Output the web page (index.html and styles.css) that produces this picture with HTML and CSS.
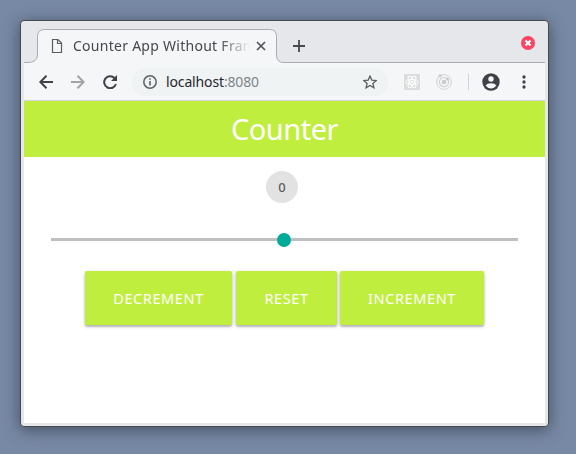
FILE: index.html
```html
<!DOCTYPE html>
<html lang="en">
<head>
<meta charset="utf-8">
<title>Counter App Without Frameworks</title>
<link rel="stylesheet" href="styles.css">
</head>
<body>
<div class="window">
  <div class="tabstrip">
    <svg class="tab-shape" width="521" height="42" viewBox="0 0 521 42"><path d="M0 42V38.500H3Q13.500 38.500 13.500 31V12.500Q13.500 5.500 20.500 5.500H245.500Q252.500 5.500 252.500 12.500V31Q252.500 38.500 260 38.500H521V42Z" fill="#f5f6f8"/><path d="M0 38.500H3Q13.500 38.500 13.500 31V12.500Q13.500 5.500 20.500 5.500H245.500Q252.500 5.500 252.500 12.500V31Q252.500 38.500 260 38.500H521" fill="none" stroke="#a9abae"/></svg>
    <div class="tab">
      <svg class="file" width="12" height="16" viewBox="0 0 12 16" fill="none" stroke="#5a5c60" stroke-width="1.200"><path d="M1.500 1.500H7L10.500 5V14.500H1.500ZM6.500 1.500V5.500H10.500"/></svg>
      <span class="tab-title">Counter App Without Frameworks</span>
      <svg class="tab-x" width="10" height="10" viewBox="0 0 10 10" stroke="#505257" stroke-width="1.700"><path d="M1 1L9 9M9 1L1 9"/></svg>
    </div>
    <svg class="plus" width="12" height="12" viewBox="0 0 12 12" stroke="#47494f" stroke-width="1.800"><path d="M6 0V12M0 6H12"/></svg>
    <svg class="close" width="14" height="14" viewBox="0 0 14 14"><circle cx="7" cy="7" r="7" fill="#fc4364"/><path d="M4.500 4.500L9.500 9.500M9.500 4.500L4.500 9.500" stroke="#fff" stroke-width="2.200"/></svg>
  </div>
  <div class="toolbar">
    <svg class="back" width="14" height="14" viewBox="0 0 14 14" fill="none" stroke="#404148" stroke-width="2"><path d="M14 7H1.500M7.500 .700L1.300 7L7.500 13.300"/></svg>
    <svg class="forward" width="14" height="14" viewBox="0 0 14 14" fill="none" stroke="#a3a4a7" stroke-width="2"><path d="M0 7H12.500M6.500 .700L12.700 7L6.500 13.300"/></svg>
    <svg class="reload" width="14" height="14" viewBox="0 0 14 14"><path d="M12.900 9A6 6 0 1 1 11.500 3" fill="none" stroke="#404148" stroke-width="2"/><path d="M14 0V6H8Z" fill="#404148"/></svg>
    <div class="address">
      <svg class="info" width="14" height="14" viewBox="0 0 14 14"><circle cx="7" cy="7" r="6.200" fill="none" stroke="#5e6166" stroke-width="1.500"/><path d="M7 3.200V4.800M7 6V10.600" stroke="#5e6166" stroke-width="1.600"/></svg>
      <span class="url">localhost<span class="port">:8080</span></span>
      <svg class="star" width="14" height="14" viewBox="0 0 14 14"><path d="M7 1L8.800 5.100L13.300 5.500L9.900 8.400L10.900 12.800L7 10.500L3.100 12.800L4.100 8.400L.700 5.500L5.200 5.100Z" fill="none" stroke="#5b5e62" stroke-width="1.300"/></svg>
    </div>
    <svg class="react" width="16" height="16" viewBox="0 0 16 16"><path fill="#dbdcdc" d="M0 0H16V16H0Z"/><g fill="none" stroke="#fff" stroke-width="1"><ellipse cx="8" cy="8" rx="6.300" ry="2.500"/><ellipse cx="8" cy="8" rx="6.300" ry="2.500" transform="rotate(60 8 8)"/><ellipse cx="8" cy="8" rx="6.300" ry="2.500" transform="rotate(120 8 8)"/></g><circle cx="8" cy="8" r="1.300" fill="#fff"/></svg>
    <svg class="orbit" width="16" height="16" viewBox="0 0 16 16"><g fill="none" stroke="#d2d3d4"><circle cx="8" cy="8" r="7.400"/><circle cx="8" cy="8" r="4.600" stroke-width="1.200"/></g><circle cx="8" cy="8" r="2.300" fill="#cbcccd"/><circle cx="4" cy="1.800" r="1.500" fill="#c5c6c7"/><circle cx="11.500" cy="5" r="1.500" fill="#c5c6c7"/></svg>
    <span class="divider"></span>
    <svg class="user" width="18" height="18" viewBox="0 0 18 18"><circle cx="9" cy="9" r="8.700" fill="#404148"/><circle cx="9" cy="6" r="2.700" fill="#f5f6f8"/><path d="M3.600 12.500Q5 10.300 9 10.300T14.400 12.500Q12.400 15.400 9 15.400T3.600 12.500Z" fill="#f5f6f8"/></svg>
    <svg class="menu" width="4" height="14" viewBox="0 0 4 14" fill="#404148"><circle cx="2" cy="2" r="1.650"/><circle cx="2" cy="7" r="1.650"/><circle cx="2" cy="12" r="1.650"/></svg>
  </div>
  <main class="page">
    <header class="header"><h1>Counter</h1></header>
    <div class="chip">0</div>
    <div class="slider"><span class="thumb"></span></div>
    <div class="buttons">
      <button class="btn dec"><span>DECREMENT</span></button>
      <button class="btn reset"><span>RESET</span></button>
      <button class="btn inc"><span>INCREMENT</span></button>
    </div>
  </main>
</div>
</body>
</html>
```
FILE: styles.css
```css
* { box-sizing: border-box; }
body {
  margin: 0;
  padding: 20px;
  width: 576px;
  height: 454px;
  overflow: hidden;
  background: #7889a5;
  font-family: "Noto Sans", "Open Sans", sans-serif;
}
.window {
  width: 529px;
  height: 407px;
  padding: 0 3px;
  border: 1px solid #47494d;
  border-radius: 4px;
  background: #e6e7ea;
  box-shadow: 0 3px 16px rgba(30, 40, 50, .6);
}
svg { display: block; flex: none; }
.tabstrip {
  position: relative;
  display: flex;
  height: 42px;
  padding: 3px 10px 0 14px;
}
.tab-shape { position: absolute; left: 0; top: 3px; }
.tab {
  position: relative;
  display: flex;
  align-items: center;
  width: 239px;
  height: 33px;
  margin-top: 5px;
  padding-left: 13px;
}
.tab-title {
  width: 177px;
  margin-left: 10px;
  overflow: hidden;
  white-space: nowrap;
  font-size: 14px;
  letter-spacing: .27px;
  line-height: 20px;
  color: #45474c;
  -webkit-mask-image: linear-gradient(90deg, #000 146px, transparent 177px);
  mask-image: linear-gradient(90deg, #000 146px, transparent 177px);
}
.tab-x { margin-left: 6px; }
.plus { position: relative; margin: 16px 0 0 16px; }
.close { position: relative; margin: 12px 0 0 auto; }
.toolbar {
  display: flex;
  align-items: center;
  height: 37px;
  padding: 1px 19px 0 15px;
  background: #f5f6f8;
}
.forward { margin-left: 18px; }
.reload { margin-left: 18px; }
.address {
  display: flex;
  align-items: center;
  width: 257px;
  height: 28px;
  margin-left: 15px;
  padding: 0 11px;
  border-radius: 14px;
  background: #eff3f4;
}
.url {
  margin-left: 9px;
  padding-bottom: 1px;
  font-size: 14px;
  letter-spacing: -.14px;
  color: #25262b;
}
.port { color: #818488; }
.star { margin-left: auto; }
.react { margin-left: 16px; }
.orbit { margin-left: 16px; }
.divider { width: 1px; height: 16px; margin-left: 16px; background: #cfd1de; }
.user { margin-left: 13px; }
.menu { margin-left: 22px; }
.page {
  height: 323px;
  border-top: 1px solid #d5d6e0;
  background: #fff;
}
.header {
  height: 56px;
  background: #bfee3e;
}
.header h1 {
  margin: 0;
  font-size: 29px;
  font-weight: 400;
  letter-spacing: -.5px;
  line-height: 55px;
  text-align: center;
  color: #fff;
}
.chip {
  width: 32px;
  height: 32px;
  margin: 14px 0 0 242px;
  border-radius: 50%;
  background: #e2e2e2;
  font-size: 13px;
  font-weight: 500;
  line-height: 32px;
  text-align: center;
  color: #5e5e5e;
}
.slider {
  display: flex;
  align-items: center;
  width: 467px;
  height: 3px;
  margin: 35px 0 0 27px;
  padding-left: 226px;
  background: #bfbfbf;
}
.thumb {
  flex: none;
  width: 14px;
  height: 14px;
  margin-top: 1px;
  border-radius: 50%;
  background: #00ab9a;
}
.buttons {
  display: flex;
  margin: 30px 0 0 61px;
}
.btn {
  display: flex;
  align-items: center;
  justify-content: center;
  height: 54px;
  padding: 0;
  border: 0;
  border-radius: 2px;
  background: #bfee3e;
  box-shadow: 0 2px 2px rgba(0, 0, 0, .2), 0 1px 4px rgba(0, 0, 0, .18);
  font: 400 14.5px "Noto Sans", sans-serif;
  letter-spacing: .6px;
  color: #fff;
}
.btn span { padding-bottom: 1px; }
.dec { width: 147px; }
.reset { width: 101px; margin-left: 4px; }
.inc { width: 144px; margin-left: 3px; }
```
